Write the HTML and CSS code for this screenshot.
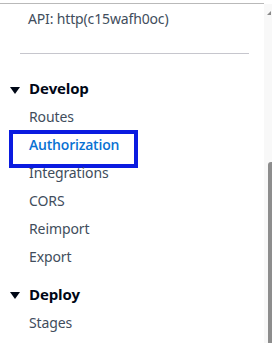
FILE: index.html
```html
<!DOCTYPE html>
<html lang="en">
<head>
<meta charset="utf-8">
<title>API navigation</title>
<link rel="stylesheet" href="styles.css">
</head>
<body>
<div class="page">
  <div class="panel">
    <div class="content">
      <div class="api-name">API: http(c15wafh0oc)</div>
      <hr class="divider">
      <section class="group">
        <h2 class="group-title">
          <svg class="caret" width="10" height="7" viewBox="0 0 10 7"><path d="M0 0H10L5 7Z" fill="#000716"/></svg>
          <span>Develop</span>
        </h2>
        <ul class="nav-list">
          <li class="nav-item"><a class="nav-link">Routes</a></li>
          <li class="nav-item"><a class="nav-link active">Authorization</a></li>
          <li class="nav-item"><a class="nav-link">Integrations</a></li>
          <li class="nav-item"><a class="nav-link">CORS</a></li>
          <li class="nav-item"><a class="nav-link">Reimport</a></li>
          <li class="nav-item"><a class="nav-link">Export</a></li>
        </ul>
      </section>
      <section class="group group-deploy">
        <h2 class="group-title">
          <svg class="caret" width="10" height="7" viewBox="0 0 10 7"><path d="M0 0H10L5 7Z" fill="#000716"/></svg>
          <span>Deploy</span>
        </h2>
        <ul class="nav-list">
          <li class="nav-item"><a class="nav-link">Stages</a></li>
        </ul>
      </section>
    </div>
    <div class="scrollbar">
      <svg class="scroll-arrow" width="4" height="4" viewBox="0 0 4 4"><path d="M4 0V4H0Z" fill="#8a8a8a"/></svg>
      <div class="scroll-thumb"></div>
    </div>
  </div>
</div>
</body>
</html>
```
FILE: styles.css
```css
html, body {
  margin: 0;
  padding: 0;
  background: #ffffff;
}
body {
  font-family: "Noto Sans", "Open Sans", sans-serif;
  font-size: 14px;
  line-height: 20px;
  color: #414d5c;
}
.page {
  height: 343px;
  overflow: hidden;
  padding-top: 3px;
  box-sizing: border-box;
}
.panel {
  display: flex;
  height: 100%;
}
.content {
  flex: 1;
  border-top: 1px solid #b9b9b9;
  padding-top: 5px;
  min-width: 0;
}
.api-name {
  padding-left: 28px;
  white-space: nowrap;
  letter-spacing: -0.15px;
}
.divider {
  border: 0;
  border-top: 1px solid #c6c6cd;
  margin: 24px 15px 0 20px;
  height: 0;
}
.group {
  margin-top: 24px;
}
.group-deploy {
  margin-top: 13px;
}
.group-title {
  display: flex;
  align-items: flex-start;
  margin: 0;
  padding-left: 10px;
  font-family: "Open Sans", "Noto Sans", sans-serif;
  font-size: 15px;
  line-height: 21px;
  font-weight: 700;
  color: #000716;
  letter-spacing: -0.15px;
  height: 20px;
}
.caret {
  flex: none;
  margin-top: 9px;
  margin-right: 9px;
}
.group-deploy .caret {
  margin-top: 8px;
}
.nav-list {
  list-style: none;
  margin: 5px 0 0;
  padding: 0;
}
.nav-item {
  padding: 4px 0 4px 29px;
  height: 20px;
}
.nav-link {
  color: #414d5c;
  white-space: nowrap;
  letter-spacing: -0.1px;
}
.nav-link.active {
  display: inline-block;
  font-family: "Open Sans", "Noto Sans", sans-serif;
  color: #0972d3;
  font-weight: 600;
  letter-spacing: -0.2px;
  padding: 1px 15px 9px 16px;
  margin: -1px -15px -9px -16px;
  outline: 4px solid #0a1be0;
}
.scrollbar {
  width: 8px;
  flex: none;
  margin-top: 1px;
  background: #f8f8f8;
  display: flex;
  flex-direction: column;
  align-items: flex-end;
}
.scroll-arrow {
  margin-top: 7px;
  margin-right: 1px;
}
.scroll-thumb {
  margin-top: auto;
  width: 4px;
  height: 181px;
  background: #8d8d8d;
  border-top-left-radius: 3px;
}
```
